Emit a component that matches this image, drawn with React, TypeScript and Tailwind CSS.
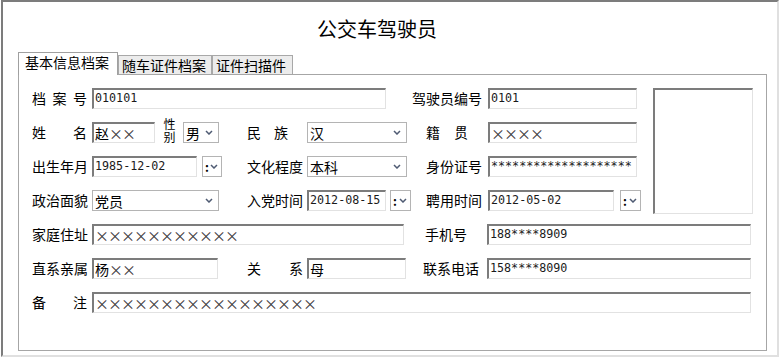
import React from "react";

const sunken =
  "h-[21px] shrink-0 border-t-2 border-l-2 border-r border-b border-t-[#7c7c7c] border-l-[#7c7c7c] border-r-[#e2e2e2] border-b-[#e2e2e2] bg-white flex items-center pl-px overflow-hidden whitespace-nowrap";
const comboCls =
  "h-[21px] shrink-0 border border-[#b4b4b4] bg-white flex items-center justify-between pl-[2px] pr-[5px] overflow-hidden whitespace-nowrap";
const mono = "font-['DejaVu_Sans_Mono',monospace] text-[11.7px] text-[#1a1a1a]";
const cjkText = "text-[14px] leading-[18px] text-black";

function Chevron() {
  return (
    <svg width="8" height="5" viewBox="0 0 8 5" className="shrink-0">
      <path d="M1 1 L4 4 L7 1" fill="none" stroke="#4f5b73" strokeWidth="1.5" />
    </svg>
  );
}

function Xs({ n }: { n: number }) {
  return (
    <>
      {Array.from({ length: n }).map((_, i) => (
        <span key={i} className="inline-block w-[13px] text-center text-[14px] text-[#3a3a3a]">
          ×
        </span>
      ))}
    </>
  );
}

function Label({ text }: { text: string }) {
  return <div className="shrink-0 text-[14px] leading-[21px] text-black whitespace-nowrap">{text}</div>;
}

function Spread({ chars, cls }: { chars: string[]; cls: string }) {
  return (
    <div className={"flex justify-between text-[14px] leading-[21px] text-black " + cls}>
      {chars.map((c, i) => (
        <span key={i}>{c}</span>
      ))}
    </div>
  );
}

function SmallCombo({ cls }: { cls: string }) {
  return (
    <div className={"h-[21px] shrink-0 border border-[#b4b4b4] bg-white flex items-center justify-between pl-[2px] pr-[3px] " + cls}>
      <span className="text-[12px] leading-[12px] text-black font-bold">:</span>
      <Chevron />
    </div>
  );
}

export default function App() {
  return (
    <div className="w-[780px] h-[360px] bg-white font-['Noto_Sans_CJK_SC',sans-serif] overflow-hidden">
      <div className="ml-px w-[778px] h-[357px] border-2 border-t-[#7c7c7c] border-l-[#7c7c7c] border-r-[#e0e0e0] border-b-[#e0e0e0]">
        {/* title */}
        <div className="h-[50px] pt-[17px] pl-[314px]">
          <div className="text-[20px] leading-[20px] text-black">公交车驾驶员</div>
        </div>

        {/* tabs */}
        <div className="h-[22px] pl-[15px] flex items-end">
          <div className="relative z-10 -mb-px w-[100px] h-[23px] shrink-0 border border-b-0 border-[#a0a0a0] bg-white pl-[6px] pt-px text-[14px] leading-[17px] text-black">
            基本信息档案
          </div>
          <div className="w-[94px] h-[19px] shrink-0 border border-b-0 border-[#a8a8a8] bg-[#ececec] pl-[3px] pt-px text-[14px] leading-[16px] text-black">
            随车证件档案
          </div>
          <div className="w-[81px] h-[19px] shrink-0 border border-b-0 border-[#a8a8a8] bg-[#ececec] pl-[3px] pt-px text-[14px] leading-[16px] text-black">
            证件扫描件
          </div>
        </div>

        {/* panel */}
        <div className="ml-[15px] w-[749px] h-[277px] border border-[#a6a6a6] pt-[13px] pl-[13px]">
          <div className="flex items-start">
            <div className="w-[609px] shrink-0 flex flex-col gap-[13px]">
              {/* row 1 */}
              <div className="flex items-center h-[21px]">
                <div className="w-[60px] shrink-0">
                  <Spread chars={["档", "案", "号"]} cls="w-[55px]" />
                </div>
                <div className={sunken + " w-[294px]"}>
                  <span className={mono}>010101</span>
                </div>
                <div className="ml-[26px] w-[76px] shrink-0">
                  <Label text="驾驶员编号" />
                </div>
                <div className={sunken + " w-[149px]"}>
                  <span className={mono}>0101</span>
                </div>
              </div>

              {/* row 2 */}
              <div className="flex items-center h-[21px]">
                <div className="w-[60px] shrink-0">
                  <Spread chars={["姓", "名"]} cls="w-[55px]" />
                </div>
                <div className={sunken + " w-[63px]"}>
                  <span className={cjkText}>赵</span>
                  <Xs n={2} />
                </div>
                <div className="ml-[7px] mb-[4px] w-[14px] h-[26px] shrink-0 flex justify-center text-[12px] leading-[14px] tracking-[1px] text-black [writing-mode:vertical-rl]">
                  性别
                </div>
                <div className={comboCls + " ml-[7px] w-[36px]"}>
                  <span className={cjkText}>男</span>
                  <Chevron />
                </div>
                <div className="ml-[28px] w-[60px] shrink-0">
                  <Spread chars={["民", "族"]} cls="w-[41px]" />
                </div>
                <div className={comboCls + " w-[100px] pr-[2px]"}>
                  <span className={cjkText}>汉</span>
                  <Chevron />
                </div>
                <div className="ml-[19px] w-[62px] shrink-0">
                  <Spread chars={["籍", "贯"]} cls="w-[42px]" />
                </div>
                <div className={sunken + " w-[149px]"}>
                  <Xs n={4} />
                </div>
              </div>

              {/* row 3 */}
              <div className="flex items-center h-[21px]">
                <div className="w-[60px] shrink-0">
                  <Label text="出生年月" />
                </div>
                <div className={sunken + " w-[105px]"}>
                  <span className={mono}>1985-12-02</span>
                </div>
                <SmallCombo cls="ml-[5px] w-[20px]" />
                <div className="ml-[25px] w-[60px] shrink-0">
                  <Label text="文化程度" />
                </div>
                <div className={comboCls + " w-[100px] pr-[2px]"}>
                  <span className={cjkText}>本科</span>
                  <Chevron />
                </div>
                <div className="ml-[19px] w-[62px] shrink-0">
                  <Label text="身份证号" />
                </div>
                <div className={sunken + " w-[149px]"}>
                  <span className={mono}>********************</span>
                </div>
              </div>

              {/* row 4 */}
              <div className="flex items-center h-[21px]">
                <div className="w-[60px] shrink-0">
                  <Label text="政治面貌" />
                </div>
                <div className={comboCls + " w-[127px]"}>
                  <span className={cjkText}>党员</span>
                  <Chevron />
                </div>
                <div className="ml-[28px] w-[60px] shrink-0">
                  <Label text="入党时间" />
                </div>
                <div className={sunken + " w-[79px]"}>
                  <span className={mono}>2012-08-15</span>
                </div>
                <SmallCombo cls="ml-[4px] w-[21px]" />
                <div className="ml-[15px] w-[62px] shrink-0">
                  <Label text="聘用时间" />
                </div>
                <div className={sunken + " w-[126px]"}>
                  <span className={mono}>2012-05-02</span>
                </div>
                <SmallCombo cls="ml-[6px] w-[21px]" />
              </div>
            </div>

            {/* photo */}
            <div className="ml-[12px] w-[100px] h-[126px] shrink-0 border-t-2 border-l-2 border-r border-b border-t-[#7c7c7c] border-l-[#7c7c7c] border-r-[#e2e2e2] border-b-[#e2e2e2] bg-white" />
          </div>

          <div className="mt-[10px] flex flex-col gap-[13px]">
            {/* row 5 */}
            <div className="flex items-center h-[21px]">
              <div className="w-[60px] shrink-0">
                <Label text="家庭住址" />
              </div>
              <div className={sunken + " w-[312px]"}>
                <Xs n={11} />
              </div>
              <div className="ml-[21px] w-[62px] shrink-0">
                <Label text="手机号" />
              </div>
              <div className={sunken + " w-[264px]"}>
                <span className={mono}>188****8909</span>
              </div>
            </div>

            {/* row 6 */}
            <div className="flex items-center h-[21px]">
              <div className="w-[60px] shrink-0">
                <Label text="直系亲属" />
              </div>
              <div className={sunken + " w-[126px]"}>
                <span className={cjkText}>杨</span>
                <Xs n={2} />
              </div>
              <div className="ml-[29px] w-[60px] shrink-0">
                <Spread chars={["关", "系"]} cls="w-[56px]" />
              </div>
              <div className={sunken + " w-[99px]"}>
                <span className={cjkText}>母</span>
              </div>
              <div className="ml-[17px] w-[64px] shrink-0">
                <Label text="联系电话" />
              </div>
              <div className={sunken + " w-[264px]"}>
                <span className={mono}>158****8090</span>
              </div>
            </div>

            {/* row 7 */}
            <div className="flex items-center h-[21px]">
              <div className="w-[60px] shrink-0">
                <Spread chars={["备", "注"]} cls="w-[55px]" />
              </div>
              <div className={sunken + " w-[659px]"}>
                <Xs n={17} />
              </div>
            </div>
          </div>
        </div>
      </div>
    </div>
  );
}
